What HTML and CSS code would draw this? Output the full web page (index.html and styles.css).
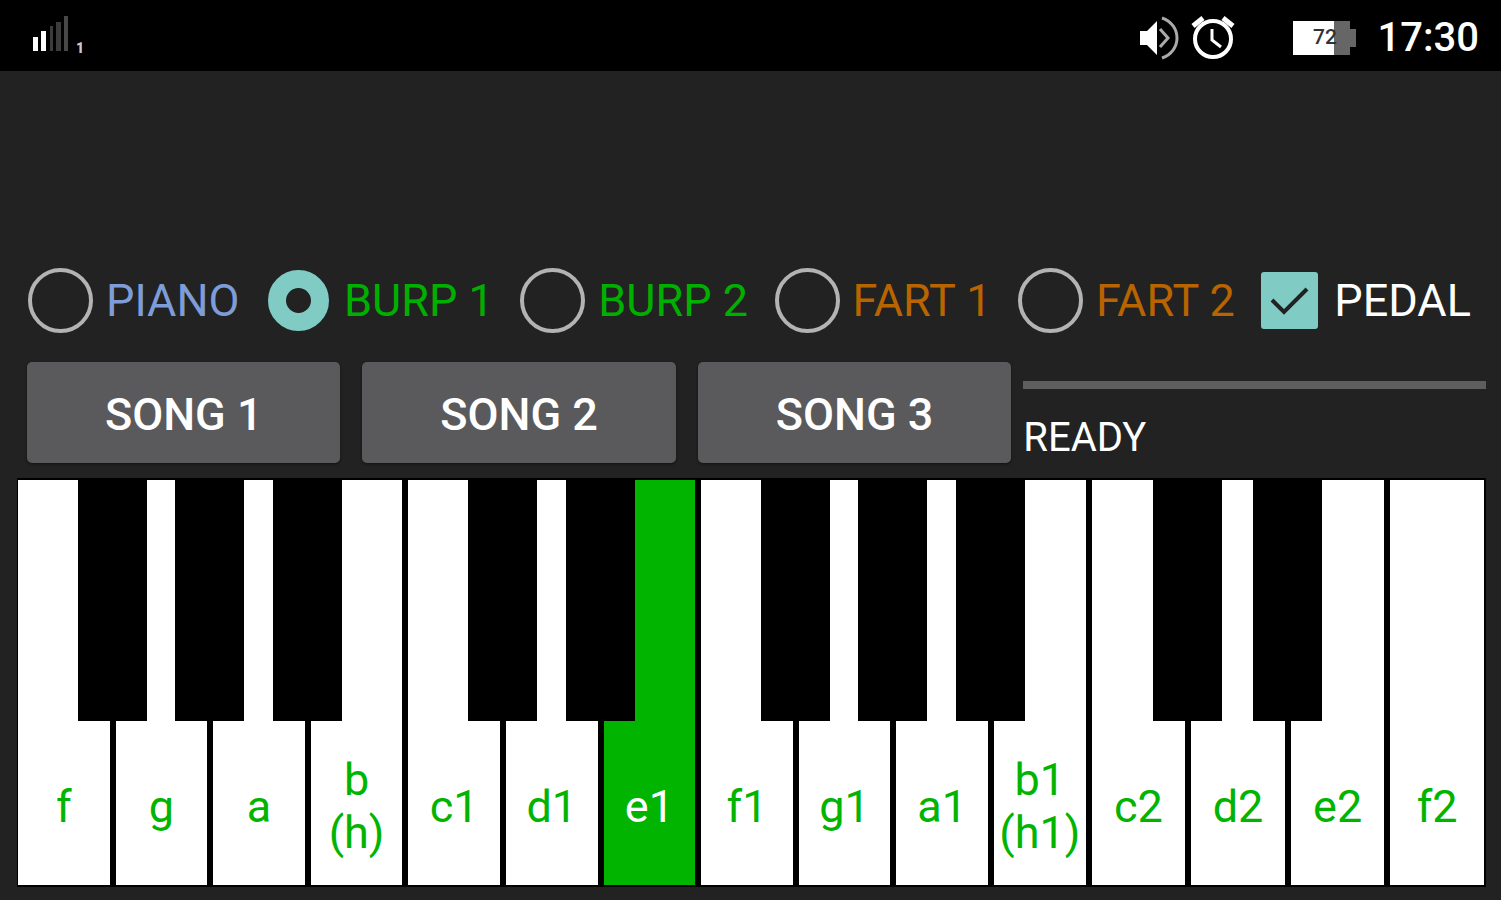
FILE: index.html
```html
<!DOCTYPE html>
<html lang="en">
<head>
    <meta charset="UTF-8">
    <meta name="viewport" content="width=device-width, initial-scale=1.0">
    <title>Piano</title>
    <link rel="stylesheet" href="styles.css">
</head>
<body>
    <header class="status-bar">
        <div class="signal">
            <svg width="38" height="38" viewBox="0 0 38 38" aria-hidden="true">
                <rect x="1" y="22" width="5" height="14" fill="#fff"/>
                <rect x="9" y="16" width="5" height="20" fill="#fff"/>
                <rect x="18" y="11" width="3" height="25" fill="#3c3c3c"/>
                <rect x="24" y="7" width="5" height="29" fill="#3c3c3c"/>
                <rect x="32" y="1" width="4" height="35" fill="#484848"/>
            </svg>
            <span class="sim">1</span>
        </div>
        <div class="status-icons">
            <svg width="42" height="46" viewBox="0 0 42 46" aria-hidden="true">
                <path d="M1 16h7L18 6v34L8 30H1z" fill="#fff"/>
                <path d="M21 14l8 9-8 9" fill="none" stroke="#aaa" stroke-width="3"/>
                <path d="M23 3C43 10 43 36 23 43" fill="none" stroke="#aaa" stroke-width="3"/>
            </svg>
            <svg class="alarm" width="44" height="46" viewBox="0 0 44 46" fill="none" stroke="#fff" aria-hidden="true">
                <circle cx="22" cy="24" r="18" stroke-width="4"/>
                <path d="M2 11l10-8M42 11L32 3" stroke-width="5"/>
                <path d="M21 14v11l9 7" stroke-width="3"/>
            </svg>
            <div class="battery">
                <span class="battery-level">72</span>
            </div>
            <time class="clock">17:30</time>
        </div>
    </header>

    <main class="app">
        <div class="options">
            <label class="option blue"><input type="radio" name="sound">PIANO</label>
            <label class="option green"><input type="radio" name="sound" checked>BURP 1</label>
            <label class="option green"><input type="radio" name="sound">BURP 2</label>
            <label class="option orange"><input type="radio" name="sound">FART 1</label>
            <label class="option orange"><input type="radio" name="sound">FART 2</label>
            <label class="option pedal">
                <span class="check">
                    <input type="checkbox" checked>
                    <svg width="57" height="57" viewBox="0 0 57 57" aria-hidden="true">
                        <path d="M11 28l12 12 23-23" fill="none" stroke="#222" stroke-width="4"/>
                    </svg>
                </span>
                PEDAL
            </label>
        </div>

        <div class="songs">
            <div class="song-buttons">
                <button class="song" type="button">SONG 1</button>
                <button class="song" type="button">SONG 2</button>
                <button class="song" type="button">SONG 3</button>
            </div>
            <div class="player">
                <progress class="song-progress" id="song-progress" value="0" max="100"></progress>
                <label class="player-state" for="song-progress">READY</label>
            </div>
        </div>

        <div class="keyboard">
            <div class="slot"><button class="key" type="button"><span>f</span></button><button class="black" type="button" aria-label="f sharp"></button></div>
            <div class="slot"><button class="key" type="button"><span>g</span></button><button class="black" type="button" aria-label="g sharp"></button></div>
            <div class="slot"><button class="key" type="button"><span>a</span></button><button class="black" type="button" aria-label="a sharp"></button></div>
            <div class="slot"><button class="key" type="button"><span>b<br>(h)</span></button></div>
            <div class="slot"><button class="key" type="button"><span>c1</span></button><button class="black" type="button" aria-label="c1 sharp"></button></div>
            <div class="slot"><button class="key" type="button"><span>d1</span></button><button class="black" type="button" aria-label="d1 sharp"></button></div>
            <div class="slot"><button class="key pressed" type="button"><span>e1</span></button></div>
            <div class="slot"><button class="key" type="button"><span>f1</span></button><button class="black" type="button" aria-label="f1 sharp"></button></div>
            <div class="slot"><button class="key" type="button"><span>g1</span></button><button class="black" type="button" aria-label="g1 sharp"></button></div>
            <div class="slot"><button class="key" type="button"><span>a1</span></button><button class="black" type="button" aria-label="a1 sharp"></button></div>
            <div class="slot"><button class="key" type="button"><span>b1<br>(h1)</span></button></div>
            <div class="slot"><button class="key" type="button"><span>c2</span></button><button class="black" type="button" aria-label="c2 sharp"></button></div>
            <div class="slot"><button class="key" type="button"><span>d2</span></button><button class="black" type="button" aria-label="d2 sharp"></button></div>
            <div class="slot"><button class="key" type="button"><span>e2</span></button></div>
            <div class="slot"><button class="key" type="button"><span>f2</span></button></div>
        </div>
    </main>
</body>
</html>
```
FILE: styles.css
```css
* {
    box-sizing: border-box;
}
body {
    font-family: Roboto, 'Liberation Sans', sans-serif;
    font-size: 45px;
    margin: 0;
    min-height: 100vh;
    display: flex;
    flex-direction: column;
    background-color: #222;
    color: #fff;
}
button {
    font: inherit;
    margin: 0;
    padding: 0;
    border: 0;
    cursor: pointer;
}
.status-bar {
    display: flex;
    justify-content: space-between;
    align-items: center;
    height: 71px;
    padding: 4px 22px 0 32px;
    background-color: #000;
}
.signal {
    display: flex;
    align-items: flex-end;
    gap: 6px;
    padding-bottom: 8px;
}
.sim {
    font-size: 14px;
    line-height: 10px;
    font-weight: 900;
    color: #ccc;
}
.status-icons {
    display: flex;
    align-items: center;
}
.alarm {
    margin-left: 10px;
}
.battery {
    position: relative;
    width: 57px;
    height: 34px;
    margin: 0 28px 0 58px;
    background: linear-gradient(to right, #fff 72%, #666 72%);
    color: #333;
    text-align: center;
}
.battery::after {
    content: "";
    position: absolute;
    top: 8px;
    right: -6px;
    width: 6px;
    height: 18px;
    background-color: #666;
}
.battery-level {
    display: block;
    padding-left: 8px;
    font-size: 21px;
    font-weight: 500;
    line-height: 32px;
}
.clock {
    font-size: 40px;
    font-weight: 500;
}
.app {
    flex: 1;
    display: flex;
    flex-direction: column;
    padding: 197px 15px 13px 17px;
}
.options {
    display: flex;
    justify-content: space-between;
    align-items: center;
    padding: 0 15px 0 11px;
}
.option {
    display: flex;
    align-items: center;
    gap: 13px;
    line-height: 65px;
    white-space: nowrap;
    cursor: pointer;
}
.option input {
    appearance: none;
    margin: 0;
    cursor: pointer;
}
.option input[type="radio"] {
    width: 65px;
    height: 65px;
    border: 4px solid #b3b3b3;
    border-radius: 50%;
}
.option input[type="radio"]:checked {
    width: 61px;
    height: 61px;
    margin: 2px;
    border: 18px solid #80cbc4;
}
.blue {
    color: #7e9dd8;
}
.green {
    color: #00b000;
}
.orange {
    color: #b86400;
}
.pedal {
    gap: 16px;
}
.check {
    display: grid;
}
.check input,
.check svg {
    grid-area: 1 / 1;
}
.check svg {
    pointer-events: none;
}
.check input {
    width: 57px;
    height: 57px;
    border-radius: 3px;
    border: 4px solid #b3b3b3;
}
.check input:checked {
    border: 0;
    background-color: #80cbc4;
}
.check input:not(:checked) + svg {
    visibility: hidden;
}
.songs {
    display: grid;
    grid-template-columns: 985fr 463fr;
    gap: 12px;
    margin: 29px 0 15px;
    padding-left: 10px;
}
.song-buttons {
    display: grid;
    grid-template-columns: repeat(3, 1fr);
    gap: 22px;
}
.song {
    height: 101px;
    padding-top: 3px;
    border-radius: 5px;
    background-color: #5a5a5c;
    color: #fff;
    font-weight: 500;
    box-shadow: 0 1px 3px rgba(0,0,0,0.5);
}
.player {
    display: flex;
    flex-direction: column;
    gap: 25px;
    padding-top: 19px;
}
.song-progress {
    appearance: none;
    display: block;
    width: 100%;
    height: 8px;
    border: 0;
    background-color: #5e5e5e;
}
.song-progress::-webkit-progress-bar {
    background-color: #5e5e5e;
}
.song-progress::-webkit-progress-value {
    background-color: #80cbc4;
}
.player-state {
    font-size: 40px;
    line-height: 48px;
}
.keyboard {
    flex: 1;
    display: grid;
    grid-template-columns: repeat(11, 92fr) repeat(4, 94fr);
    gap: 6px;
    min-height: 320px;
    padding: 2px 2px 2px 1px;
    background-color: #000;
}
.slot {
    position: relative;
    display: flex;
}
.key {
    flex: 1;
    display: flex;
    align-items: flex-end;
    justify-content: center;
    padding-bottom: 26px;
    background-color: #fff;
    color: #00b400;
    line-height: 53px;
}
.key span {
    display: flex;
    flex-direction: column;
    justify-content: center;
    height: 106px;
}
.key.pressed {
    background-color: #00b400;
    color: #fff;
}
/* sharps straddle the gap to the next white key */
.black {
    position: absolute;
    top: 0;
    right: -37px;
    z-index: 1;
    width: 69px;
    height: calc(100% - 164px);
    background-color: #000;
}
```
